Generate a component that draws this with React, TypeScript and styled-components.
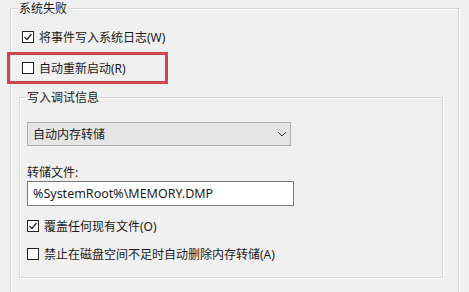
import styled, { createGlobalStyle } from 'styled-components'

const GlobalStyle = createGlobalStyle`
  html, body {
    margin: 0;
    padding: 0;
    background: #f0f0f0;
  }
  body {
    font-family: "Noto Sans", "Noto Sans CJK SC", sans-serif;
    font-size: 12px;
    color: #1a1a1a;
  }
`

const Page = styled.div`
  position: relative;
  width: 469px;
  height: 292px;
  overflow: hidden;
  padding: 0 10px 0 10px;
  box-sizing: border-box;
`

const Group = styled.fieldset<{ $inner?: boolean }>`
  margin: ${(p) => (p.$inner ? '12px 0 0 -3px' : '0')};
  width: ${(p) => (p.$inner ? '424px' : '449px')};
  box-sizing: border-box;
  border: 1px solid #d8d8d8;
  box-shadow: 1px 1px 0 #ffffff, inset 1px 1px 0 #ffffff;
  padding: ${(p) => (p.$inner ? '0 0 14px 7px' : '0 0 40px 11px')};
  display: flex;
  flex-direction: column;
  align-items: flex-start;
`

const Legend = styled.legend<{ $inner?: boolean }>`
  padding: 0 1px;
  margin-left: ${(p) => (p.$inner ? '-1px' : '-4px')};
  line-height: 17px;
  height: 17px;
`

const Row = styled.label<{ $top: number }>`
  display: flex;
  align-items: center;
  gap: 5px;
  height: 18px;
  margin-top: ${(p) => p.$top}px;
  white-space: nowrap;
`

const Box = styled.span`
  width: 12px;
  height: 12px;
  border: 1px solid #222222;
  background: #ffffff;
  box-sizing: border-box;
  display: flex;
  align-items: center;
  justify-content: center;
`

const Select = styled.div`
  margin-top: 16px;
  width: 264px;
  height: 24px;
  box-sizing: border-box;
  border: 1px solid #adadad;
  background: #e5e5e5;
  display: flex;
  align-items: center;
  justify-content: space-between;
  padding: 0 3px 0 5px;
`

const FieldLabel = styled.div`
  margin-top: 18px;
  line-height: 17px;
`

const Input = styled.div`
  width: 267px;
  height: 25px;
  box-sizing: border-box;
  border: 1px solid #7a7a7a;
  background: #ffffff;
  display: flex;
  align-items: center;
  padding-left: 5px;
  font-size: 12.5px;
`

const Highlight = styled.div`
  position: absolute;
  left: 7px;
  top: 52px;
  width: 161px;
  height: 32px;
  box-sizing: border-box;
  border: 3px solid #d2454b;
  pointer-events: none;
`

const Check = ({ on }: { on?: boolean }) => (
  <Box>
    {on && (
      <svg width="10" height="10" viewBox="0 0 10 10">
        <polyline points="1.5,5 4,7.5 8.5,2" fill="none" stroke="#222" strokeWidth="1.2" />
      </svg>
    )}
  </Box>
)

const Chevron = () => (
  <svg width="10" height="6" viewBox="0 0 10 6">
    <polyline points="1,1 5,5 9,1" fill="none" stroke="#333" strokeWidth="1" />
  </svg>
)

export default function App() {
  return (
    <Page>
      <GlobalStyle />
      <Group>
        <Legend>系统失败</Legend>
        <Row $top={11}>
          <Check on />
          将事件写入系统日志(W)
        </Row>
        <Row $top={13}>
          <Check />
          自动重新启动(R)
        </Row>

        <Group $inner>
          <Legend $inner>写入调试信息</Legend>
          <Select>
            <span>自动内存转储</span>
            <Chevron />
          </Select>
          <FieldLabel>转储文件:</FieldLabel>
          <Input>%SystemRoot%\MEMORY.DMP</Input>
          <Row $top={11}>
            <Check on />
            覆盖任何现有文件(O)
          </Row>
          <Row $top={10}>
            <Check />
            禁止在磁盘空间不足时自动删除内存转储(A)
          </Row>
        </Group>
      </Group>
      <Highlight />
    </Page>
  )
}
